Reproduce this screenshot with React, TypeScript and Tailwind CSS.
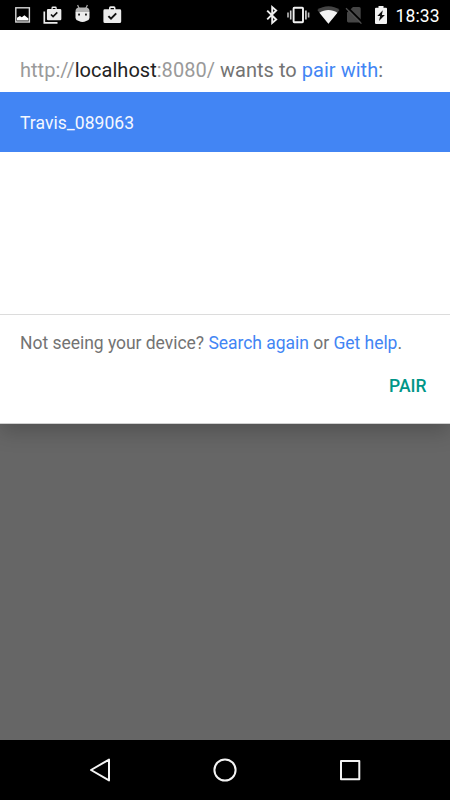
import React from "react";

const iconProps = { height: 30, className: "block shrink-0" };

function PictureIcon() {
  return (
    <svg {...iconProps} width={16} viewBox="0 0 16 30" fill="none">
      <rect x="0.8" y="7.8" width="13.6" height="14.2" stroke="#d8d8d8" strokeWidth="1.4" />
      <path d="M2 20.5V17.8L4.9 15.9L6.8 17.2L9.4 15.2L13.4 18.6V20.5Z" fill="#fff" />
    </svg>
  );
}

function CheckBag({ x = 0, y = 0, scale = 1 }: { x?: number; y?: number; scale?: number }) {
  return (
    <g transform={`translate(${x} ${y}) scale(${scale})`}>
      <path
        fill="#ececec"
        fillRule="evenodd"
        d="M6 3V1.6Q6 0 7.6 0H10.9Q12.5 0 12.5 1.6V3H16.8Q18.2 3 18.2 4.4V15.2Q18.2 16.8 16.6 16.8H2Q.4 16.8 .4 15.2V4.4Q.4 3 1.8 3ZM7.6 3H10.9V1.6H7.6Z"
      />
      <path d="M5.4 9.8L8 12.4L13.2 7.1" fill="none" stroke="#111" strokeWidth="2" />
    </g>
  );
}

function StackedBagIcon() {
  return (
    <svg {...iconProps} width={19} viewBox="0 0 19 30" fill="none">
      <CheckBag x={3.6} y={6.6} scale={0.81} />
      <path d="M1.3 11.5V22.9H14.5" stroke="#ececec" strokeWidth="1.7" />
    </svg>
  );
}

function RobotIcon() {
  return (
    <svg {...iconProps} width={16} viewBox="0 0 16 30" fill="none">
      <path d="M2.6 5L4.2 8.5M12.4 5L10.8 8.5" stroke="#aaa" strokeWidth="1.2" />
      <path d="M.5 12.3V11Q.7 7.8 4 7.6H11Q14.3 7.8 14.5 11V12.3Z" fill="#b4b4b4" />
      <path d="M.5 12H14.5V18Q14.2 20.4 11.2 21Q7.5 22.8 3.8 21Q.8 20.4 .5 18Z" fill="#ededed" />
      <rect x="3.1" y="13.6" width="1.9" height="1.9" fill="#222" />
      <rect x="10" y="13.6" width="1.9" height="1.9" fill="#222" />
    </svg>
  );
}

function BagIcon() {
  return (
    <svg {...iconProps} width={19} viewBox="0 0 19 30">
      <CheckBag y={6.3} />
    </svg>
  );
}

function BluetoothIcon() {
  return (
    <svg {...iconProps} width={13} viewBox="0 0 13 30" fill="none">
      <path d="M1.2 10.6L10.2 19.5L6.2 23V7L10.2 10.5L1.2 19.4" stroke="#eee" strokeWidth="1.9" />
    </svg>
  );
}

function VibrateIcon() {
  return (
    <svg {...iconProps} width={23} viewBox="0 0 23 30" fill="none">
      <rect x="6.6" y="7.8" width="9.4" height="14.4" rx="0.7" stroke="#f2f2f2" strokeWidth="1.9" />
      <path d="M3.7 10.4V19.6M18.9 10.4V19.6" stroke="#d5d5d5" strokeWidth="1.6" />
      <path d="M1 12.6V17.4M21.6 12.6V17.4" stroke="#bdbdbd" strokeWidth="1.6" />
    </svg>
  );
}

function WifiIcon() {
  return (
    <svg {...iconProps} width={23} viewBox="0 0 23 30">
      <path d="M.3 10.1C6.5 5.1 16.5 5.1 22.5 10.1L11.4 23.8Z" fill="#444" />
      <path d="M2.4 12.8C8 9.1 14.8 9.1 20.4 12.8L11.4 23.8Z" fill="#f3f3f3" />
    </svg>
  );
}

function NoSimIcon() {
  return (
    <svg {...iconProps} width={18} viewBox="0 0 18 30">
      <path d="M8 7H14.2Q15.7 7 15.7 8.7V22.6H3.4Q2 22.6 2 20.8V12.6Z" fill="#464646" />
      <path d="M2.2 7.1L17.6 22.4" stroke="#000" strokeWidth="2" />
      <path d="M1 8.2L16.4 23.6" stroke="#505050" strokeWidth="1.3" />
    </svg>
  );
}

function BatteryIcon() {
  return (
    <svg {...iconProps} width={12} viewBox="0 0 12 30">
      <path d="M3.5 6H8.5V7.8H11Q12 7.8 12 8.8V23Q12 24 11 24H1Q0 24 0 23V8.8Q0 7.8 1 7.8H3.5Z" fill="#f3f3f3" />
      <path d="M7.8 10.3L2.3 15.9H5.1L4 21L9.9 14.9H6.9Z" fill="#111" />
    </svg>
  );
}

function StatusBar() {
  return (
    <header className="flex h-[30px] items-center justify-between bg-black pl-[15px] pr-[9px]">
      <div className="flex items-center">
        <PictureIcon />
        <div className="ml-[12px]"><StackedBagIcon /></div>
        <div className="ml-[12.5px]"><RobotIcon /></div>
        <div className="ml-[12.5px]"><BagIcon /></div>
      </div>
      <div className="flex items-center">
        <BluetoothIcon />
        <div className="ml-[8px]"><VibrateIcon /></div>
        <div className="ml-[7px]"><WifiIcon /></div>
        <div className="ml-[5px]"><NoSimIcon /></div>
        <div className="ml-[11.5px]"><BatteryIcon /></div>
        <span className="ml-[9px] w-[45.5px] whitespace-nowrap pt-px text-[17.5px] leading-[30px] tracking-[0.15px] text-white">18:33</span>
      </div>
    </header>
  );
}

function PairDialog() {
  return (
    <section className="flex h-[394px] flex-col border-b border-[#d0d0d0] bg-white text-[#737373] shadow-[0_8px_20px_rgba(0,0,0,0.2)]">
      <h1 className="h-[62px] whitespace-nowrap pl-5 pt-[25px] text-[20px] font-normal leading-[30px] tracking-[0.03px]">
        <span className="text-[#9a9a9a]">http://</span>
        <span className="text-[#222]">localhost</span>
        <span className="text-[#9a9a9a]">:8080/</span> wants to{" "}
        <a className="text-[#4285f4]">pair with</a>:
      </h1>
      <div className="flex h-[60px] items-center bg-[#4285f4] pl-5 pt-[2px] text-[17.5px] tracking-[0.05px] text-[#f4f7ff]">Travis_089063</div>
      <div className="h-[162px]" />
      <p className="h-[51px] whitespace-nowrap border-t border-[#dcdcdc] pl-5 pt-[15px] text-[17.5px] leading-[26px] tracking-[-0.03px]">
        Not seeing your device? <a className="text-[#4285f4]">Search again</a> or{" "}
        <a className="text-[#4285f4]">Get help</a>.
      </p>
      <div className="flex justify-end pr-[23.5px] pt-[8px]">
        <button className="text-[17.5px] font-medium leading-[26px] text-[#009688]">PAIR</button>
      </div>
    </section>
  );
}

function NavBar() {
  return (
    <nav className="flex h-[60px] items-center justify-between bg-black px-[87px]">
      <svg width="26" height="30" viewBox="0 0 26 30" fill="none" stroke="#f4f4f4" strokeWidth="2" strokeLinejoin="round">
        <path d="M4 15L22 4.6V25.4Z" />
      </svg>
      <svg width="26" height="30" viewBox="0 0 26 30" fill="none" stroke="#f4f4f4" strokeWidth="2">
        <circle cx="13" cy="15" r="10.6" />
      </svg>
      <svg width="26" height="30" viewBox="0 0 26 30" fill="none" stroke="#f4f4f4" strokeWidth="2" strokeLinejoin="round">
        <rect x="4" y="6" width="18.3" height="18.3" />
      </svg>
    </nav>
  );
}

export default function App() {
  return (
    <div className="flex h-[800px] w-[450px] flex-col overflow-hidden bg-[#666] font-[Roboto,sans-serif]">
      <StatusBar />
      <main className="flex-1 overflow-hidden">
        <PairDialog />
      </main>
      <NavBar />
    </div>
  );
}
